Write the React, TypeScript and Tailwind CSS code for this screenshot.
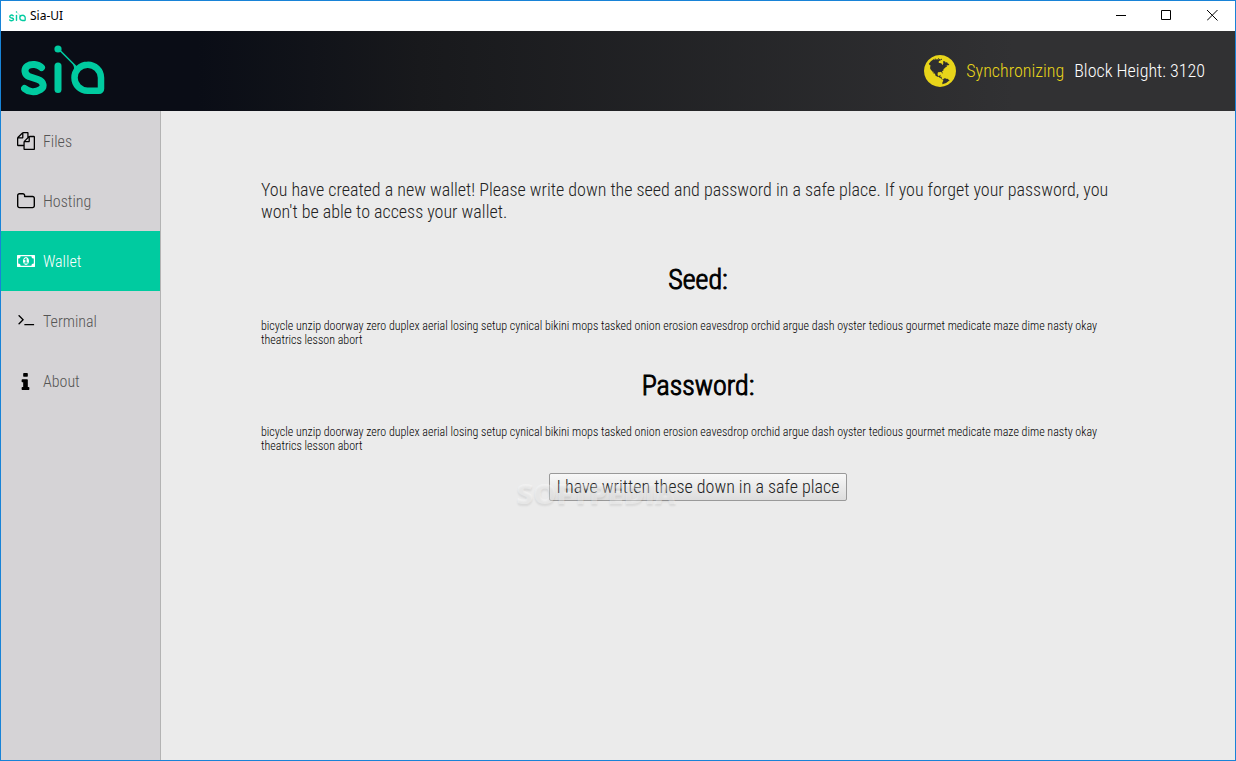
import React from "react";

const SEED =
  "bicycle unzip doorway zero duplex aerial losing setup cynical bikini mops tasked onion erosion eavesdrop orchid argue dash oyster tedious gourmet medicate maze dime nasty okay theatrics lesson abort";

const GLOBE =
  "M896 128q209 0 385.500 103t279.500 279.500 103 385.500-103 385.500-279.500 279.500-385.500 103-385.500-103-279.500-279.500-103-385.500 103-385.500 279.500-279.500 385.500-103zm274 521q-2 1-9.500 9.500t-13.500 9.500q2 0 4.500-5t5-11 3.500-7q6-7 22-15 14-6 52-12 34-8 51 11-2-2 9.500-13t14.500-12q3-2 15-4.500t15-7.500l2-22q-12 1-17.500-7t-6.500-21q0 2-6 8 0-7-4.500-8t-11.500 1-9 1q-10-3-15-7.500t-8-16.500-4-15q-2-5-9.500-11t-9.500-10q-1-2-2.500-5.500t-3-6.500-4-5.500-5.500-2.500-7 5-7.500 10-4.500 5q-3-2-6-1.500t-4.500 1-4.500 3-5 3.500q-3 2-8.500 3t-8.500 2q15-5-1-11-10-4-16-3 9-4 7.500-12t-8.500-14h5q-1-4-8.500-8.500t-17.500-8.500-13-6q-8-5-34-9.500t-33-.5q-5 6-4.500 10.500t4 14 3.500 12.500q1 6-5.500 13t-6.500 12q0 7 14 15.500t10 21.500q-3 8-16 16t-16 12q-5 8-1.500 18.500t10.500 16.500q2 2 1.500 4t-3.500 4.500-5.500 4-6.500 3.500l-3 2q-11 5-20.500-6t-13.500-26q-7-25-16-30-23-8-29 1-5-13-41-26-25-9-58-4 6-1 0-15-7-15-19-12 3-6 4-17.500t1-13.500q3-13 12-23 1-1 7-8.500t9.500-13.500.5-6q35 4 50-11 5-5 11.500-17t10.500-17q9-6 14-5.500t14.500 5.500 14.500 5q14 1 15.500-11t-7.500-20q12 1 3-17-4-7-8-9-12-4-27 5-8 4 2 8-1-1-9.500 10.500t-16.500 17.500-16-5q-1-1-5.500-13.500t-9.500-13.500q-8 0-16 15 3-8-11-15t-24-8q19-12-8-27-7-4-20.500-5t-19.500 4q-5 7-5.500 11.500t5 8 10.500 5.500 11.500 4 8.500 3q14 10 8 14-2 1-8.500 3.500t-11.500 4.500-6 4q-3 4 0 14t-2 14q-5-5-9-17.500t-7-16.500q7 9-25 6l-10-1q-4 0-16 2t-20.500 1-13.500-8q-4-8 0-20 1-4 4-2-4-3-11-9.500t-10-8.500q-46 15-94 41 6 1 12-1 5-2 13-6.500t10-5.500q34-14 42-7l5-5q14 16 20 25-7-4-30-1-20 6-22 12 7 12 5 18-4-3-11.500-10t-14.500-11-15-5q-16 0-22 1-146 80-235 222 7 7 12 8 4 1 5 9t2.500 11 11.500-3q9 8 3 19 1-1 44 27 19 17 21 21 3 11-10 18-1-2-9-9t-9-4q-3 5 .5 18.500t10.500 12.500q-7 0-9.500 16t-2.500 35.500-1 23.500l2 1q-3 12 5.500 34.500t21.500 19.500q-13 3 20 43 6 8 8 9 3 2 12 7.500t15 10 10 10.500q4 5 10 22.500t14 23.500q-2 6 9.500 20t10.500 23q-1 0-2.500 1t-2.500 1q3 7 15.500 14t15.500 13q1 3 2 10t3 11 8 2q2-20-24-62-15-25-17-29-3-5-5.500-15.500t-4.500-14.500q2 0 6 1.500t8.500 3.500 7.500 4 2 3q-3 7 2 17.500t12 18.500 17 19 12 13q6 6 14 19.500t0 13.500q9 0 20 10.500t17 19.500q5 8 8 26t5 24q2 7 8.500 13.500t12.500 9.500l16 8 13 7q5 2 18.500 10.500t21.500 11.500q10 4 16 4t14.500-2.500 13.500-3.500q15-2 29 15t21 21q36 19 55 11-2 1 .5 7.500t8 15.500 9 14.500 5.500 8.500q5 6 18 15t18 15q6-4 7-9-3 8 7 20t18 10q14-3 14-32-31 15-49-18 0-1-2.500-5.500t-4-8.500-2.500-8.500 0-7.500 5-3q9 0 10-3.500t-2-12.500-4-13q-1-8-11-20t-12-15q-5 9-16 8t-16-9q0 1-1.500 5.500t-1.500 6.500q-13 0-15-1 1-3 2.500-17.500t3.500-22.500q1-4 5.500-12t7.500-14.500 4-12.500-4.500-9.500-17.500-2.500q-19 1-26 20-1 3-3 10.500t-5 11.500-9 7q-7 3-24 2t-24-5q-13-8-22.500-29t-9.500-37q0-10 2.500-26.500t3-25-5.500-24.500q3-2 9-9.500t10-10.500q2-1 4.500-1.500t4.500 0 4-1.500 3-6q-1-1-4-3-3-3-4-3 7 3 28.500-1.500t27.500 1.500q15 11 22-2 0-1-2.500-9.500t-.5-13.500q5 27 29 9 3 3 15.500 5t17.500 5q3 2 7 5.500t5.500 4.500 5-.5 8.500-6.500q10 14 12 24 11 40 19 44 7 3 11 2t4.500-9.500 0-14-1.500-12.500l-1-8v-18l-1-8q-15-3-18.500-12t1.500-18.500 15-18.500q1-1 8-3.500t15.500-6.500 12.500-8q21-19 15-35 7 0 11-9-1 0-5-3t-7.500-5-4.500-2q9-5 2-16 5-3 7.500-11t7.500-10q9 12 21 2 8-8 1-16 5-7 20.500-10.500t18.500-9.500q7 2 8-2t1-12 3-12q4-5 15-9t13-5l17-11q3-4 0-4 18 2 31-11 10-11-6-20 3-6-3-9.500t-15-5.500q3-1 11.500-.5t10.500-1.500q15-10-7-16-17-5-43 12zm-163 877q206-36 351-189-3-3-12.500-4.500t-12.500-3.500q-18-7-24-8 1-7-2.500-13t-8-9-12.500-8-11-7q-2-2-7-6t-7-5.500-7.500-4.500-8.500-2-10 1l-3 1q-3 1-5.500 2.500t-5.500 3-4 3 0 2.500q-21-17-36-22-5-1-11-5.500t-10.500-7-10-1.500-11.500 7q-5 5-6 15t-2 13q-7-5 0-17.500t2-18.500q-3-6-10.500-4.500t-12 4.500-11.500 8.500-9 6.500-8.500 5.500-8.500 7.500q-3 4-6 12t-5 11q-2-4-11.500-6.500t-9.500-5.500q2 10 4 35t5 38q7 31-12 48-27 25-29 40-4 22 12 26 0 7-8 20.500t-7 21.500q0 6 2 16z";

type NavItem = { label: string; viewBox: string; path: string; active?: boolean };

const NAV: NavItem[] = [
  {
    label: "Files",
    viewBox: "0 0 1792 1792",
    path: "M1696 384q40 0 68 28t28 68v1216q0 40-28 68t-68 28h-960q-40 0-68-28t-28-68v-288h-544q-40 0-68-28t-28-68v-672q0-40 20-88t48-76l408-408q28-28 76-48t88-20h416q40 0 68 28t28 68v328q68-40 128-40h416zm-544 213l-299 299h299v-299zm-640-384l-299 299h299v-299zm196 647l316-316v-416h-384v416q0 40-28 68t-68 28h-416v640h512v-256q0-40 20-88t48-76zm956 804v-1152h-384v416q0 40-28 68t-68 28h-416v640h896z",
  },
  {
    label: "Hosting",
    viewBox: "64 32 1664 1664",
    path: "M1600 1312v-704q0-40-28-68t-68-28h-704q-40 0-68-28t-28-68v-64q0-40-28-68t-68-28h-320q-40 0-68 28t-28 68v960q0 40 28 68t68 28h1216q40 0 68-28t28-68zm128-704v704q0 92-66 158t-158 66h-1216q-92 0-158-66t-66-158v-960q0-92 66-158t158-66h320q92 0 158 66t66 158v32h672q92 0 158 66t66 158z",
  },
  {
    label: "Wallet",
    viewBox: "0 0 1920 1792",
    active: true,
    path: "M768 1152h384v-96h-128v-448h-114l-148 137 77 80q42-37 55-57h2v288h-128v96zm512-256q0 70-21 142t-59.5 134-101.5 101-138 39-138-39-101.5-101-59.5-134-21-142 21-142 59.5-134 101.5-101 138-39 138 39 101.5 101 59.5 134 21 142zm512 256v-512q-106 0-181-75t-75-181h-1152q0 106-75 181t-181 75v512q106 0 181 75t75 181h1152q0-106 75-181t181-75zm128-832v1152q0 26-19 45t-45 19h-1792q-26 0-45-19t-19-45v-1152q0-26 19-45t45-19h1792q26 0 45 19t19 45z",
  },
  {
    label: "Terminal",
    viewBox: "-57 150 1875 1875",
    path: "M649 983l-466 466q-10 10-23 10t-23-10l-50-50q-10-10-10-23t10-23l393-393-393-393q-10-10-10-23t10-23l50-50q10-10 23-10t23 10l466 466q10 10 10 23t-10 23zm1079 457v64q0 14-9 23t-23 9h-960q-14 0-23-9t-9-23v-64q0-14 9-23t23-9h960q14 0 23 9t9 23z",
  },
  {
    label: "About",
    viewBox: "192 46 1491 1491",
    path: "M1216 1344v128q0 26-19 45t-45 19h-512q-26 0-45-19t-19-45v-128q0-26 19-45t45-19h64v-384h-64q-26 0-45-19t-19-45v-128q0-26 19-45t45-19h384q26 0 45 19t19 45v576h64q26 0 45 19t19 45zm-128-1152v192q0 26-19 45t-45 19h-256q-26 0-45-19t-19-45v-192q0-26 19-45t45-19h256q26 0 45 19t19 45z",
  },
];

function SiaMark({ className }: { className: string }) {
  return (
    <svg viewBox="0 0 84 52" className={className} aria-hidden="true" fill="none" stroke="#00cba0" strokeLinecap="round" strokeLinejoin="round">
      <path d="M20.500 22.500C17 19 10 18.500 6.500 21C2.500 24 3.500 29.500 8 31.500L17 34.500C23 36.500 23.500 42 19.500 44.500C14 48 7.500 47 3.500 43.500" strokeWidth="7" />
      <path d="M37 21v23.500" strokeWidth="7" />
      <path d="M37.500 4l18 18" strokeWidth="1.600" />
      <path d="M50 16.500L54.500 21l4.500.500-4 6-2-2q1-4-3-9z" fill="#00cba0" stroke="none" />
      <circle cx="37" cy="4" r="3.600" fill="#00cba0" stroke="none" />
      <path d="M66.500 19.700a13 13 0 1 0 0 26h11.500a2 2 0 0 0 2-2v-11a13.200 13.200 0 0 0-13.500-13z" strokeWidth="6.500" />
    </svg>
  );
}

export default function App() {
  return (
    <div className="flex min-h-screen flex-col border border-[#1883d7] bg-[#ebebeb] font-['Roboto_Condensed','Roboto',sans-serif] font-light text-black">
      <div className="flex h-[30px] items-center justify-between bg-white">
        <div className="flex items-center gap-1 pl-2 font-['Noto_Sans',sans-serif] text-xs font-normal">
          <SiaMark className="h-[11px] w-[17px]" />
          <span>Sia-UI</span>
        </div>
        <div className="flex items-center pb-px">
          <button aria-label="Minimize" className="flex h-7 w-[46px] items-center justify-center">
            <svg className="size-[11px]" viewBox="0 0 11 11" stroke="black"><path d="M0 5.500h10" /></svg>
          </button>
          <button aria-label="Maximize" className="flex h-7 w-[45px] items-center justify-center">
            <svg className="size-[11px]" viewBox="0 0 11 11" fill="none" stroke="black"><path d="M.5.500h9v9h-9z" /></svg>
          </button>
          <button aria-label="Close" className="flex h-7 w-[46px] items-center justify-center">
            <svg className="size-[11px]" viewBox="0 0 11 11" stroke="black"><path d="M0 0l10.500 10.500M10.500 0l-10.500 10.500" /></svg>
          </button>
        </div>
      </div>

      <header className="flex h-20 items-center justify-between bg-linear-to-r from-[#0a0d16] from-16% via-[#18191c] via-34% to-[#313133] to-82% pr-[30px] pl-5">
        <SiaMark className="h-[52px] w-[84px]" />
        <div className="flex items-center gap-[10px] text-lg">
          <svg viewBox="128 128 1536 1536" className="size-8 fill-[#e8d51a]" aria-hidden="true">
            <path d={GLOBE} />
          </svg>
          <span className="text-[#e8d51a]">Synchronizing</span>
          <span className="text-white">Block Height: 3120</span>
        </div>
      </header>

      <div className="flex flex-1">
        <nav className="w-40 shrink-0 border-r border-[#b3b3b3] bg-[#d5d3d6]">
          {NAV.map((item) => (
            <a
              key={item.label}
              href="#"
              className={
                item.active
                  ? "flex h-[60px] items-center gap-2 bg-[#00cba0] pl-4 text-base text-white"
                  : "flex h-[60px] items-center gap-2 pl-4 text-base text-[#555555]"
              }
            >
              <svg viewBox={item.viewBox} className={item.active ? "size-[18px] fill-white" : "size-[18px] fill-black"} aria-hidden="true">
                <path d={item.path} />
              </svg>
              <span className="pt-0.5">{item.label}</span>
            </a>
          ))}
        </nav>
        <main className="flex-1 px-[100px] pt-[68px]">
          <p className="text-lg leading-[22px] text-[#222]">
            You have created a new wallet! Please write down the seed and password in a safe place. If you forget your password, you won't be able to access your wallet.
          </p>
          <h2 className="pt-[42px] text-center text-[28px] leading-[30px] [-webkit-text-stroke:1px_black]">Seed:</h2>
          <p className="pt-6 text-xs leading-[14px]">{SEED}</p>
          <h2 className="pt-6 text-center text-[28px] leading-[30px] [-webkit-text-stroke:1px_black]">Password:</h2>
          <p className="pt-6 text-xs leading-[14px]">{SEED}</p>
          <div className="flex justify-center pt-5">
            <div className="relative">
              <button className="h-7 rounded-[2px] border border-[#999] bg-linear-to-b from-[#f8f8f8] to-[#dddddd] px-[7px] text-lg leading-6 text-[#222]">
                I have written these down in a safe place
              </button>
              <span className="pointer-events-none absolute top-1 -left-8 font-['Open_Sans',sans-serif] text-[29px] leading-8 font-extrabold text-white/35 [text-shadow:0_2px_2px_rgb(0_0_0/0.08)]">
                SOFTPEDIA
              </span>
            </div>
          </div>
        </main>
      </div>
    </div>
  );
}
